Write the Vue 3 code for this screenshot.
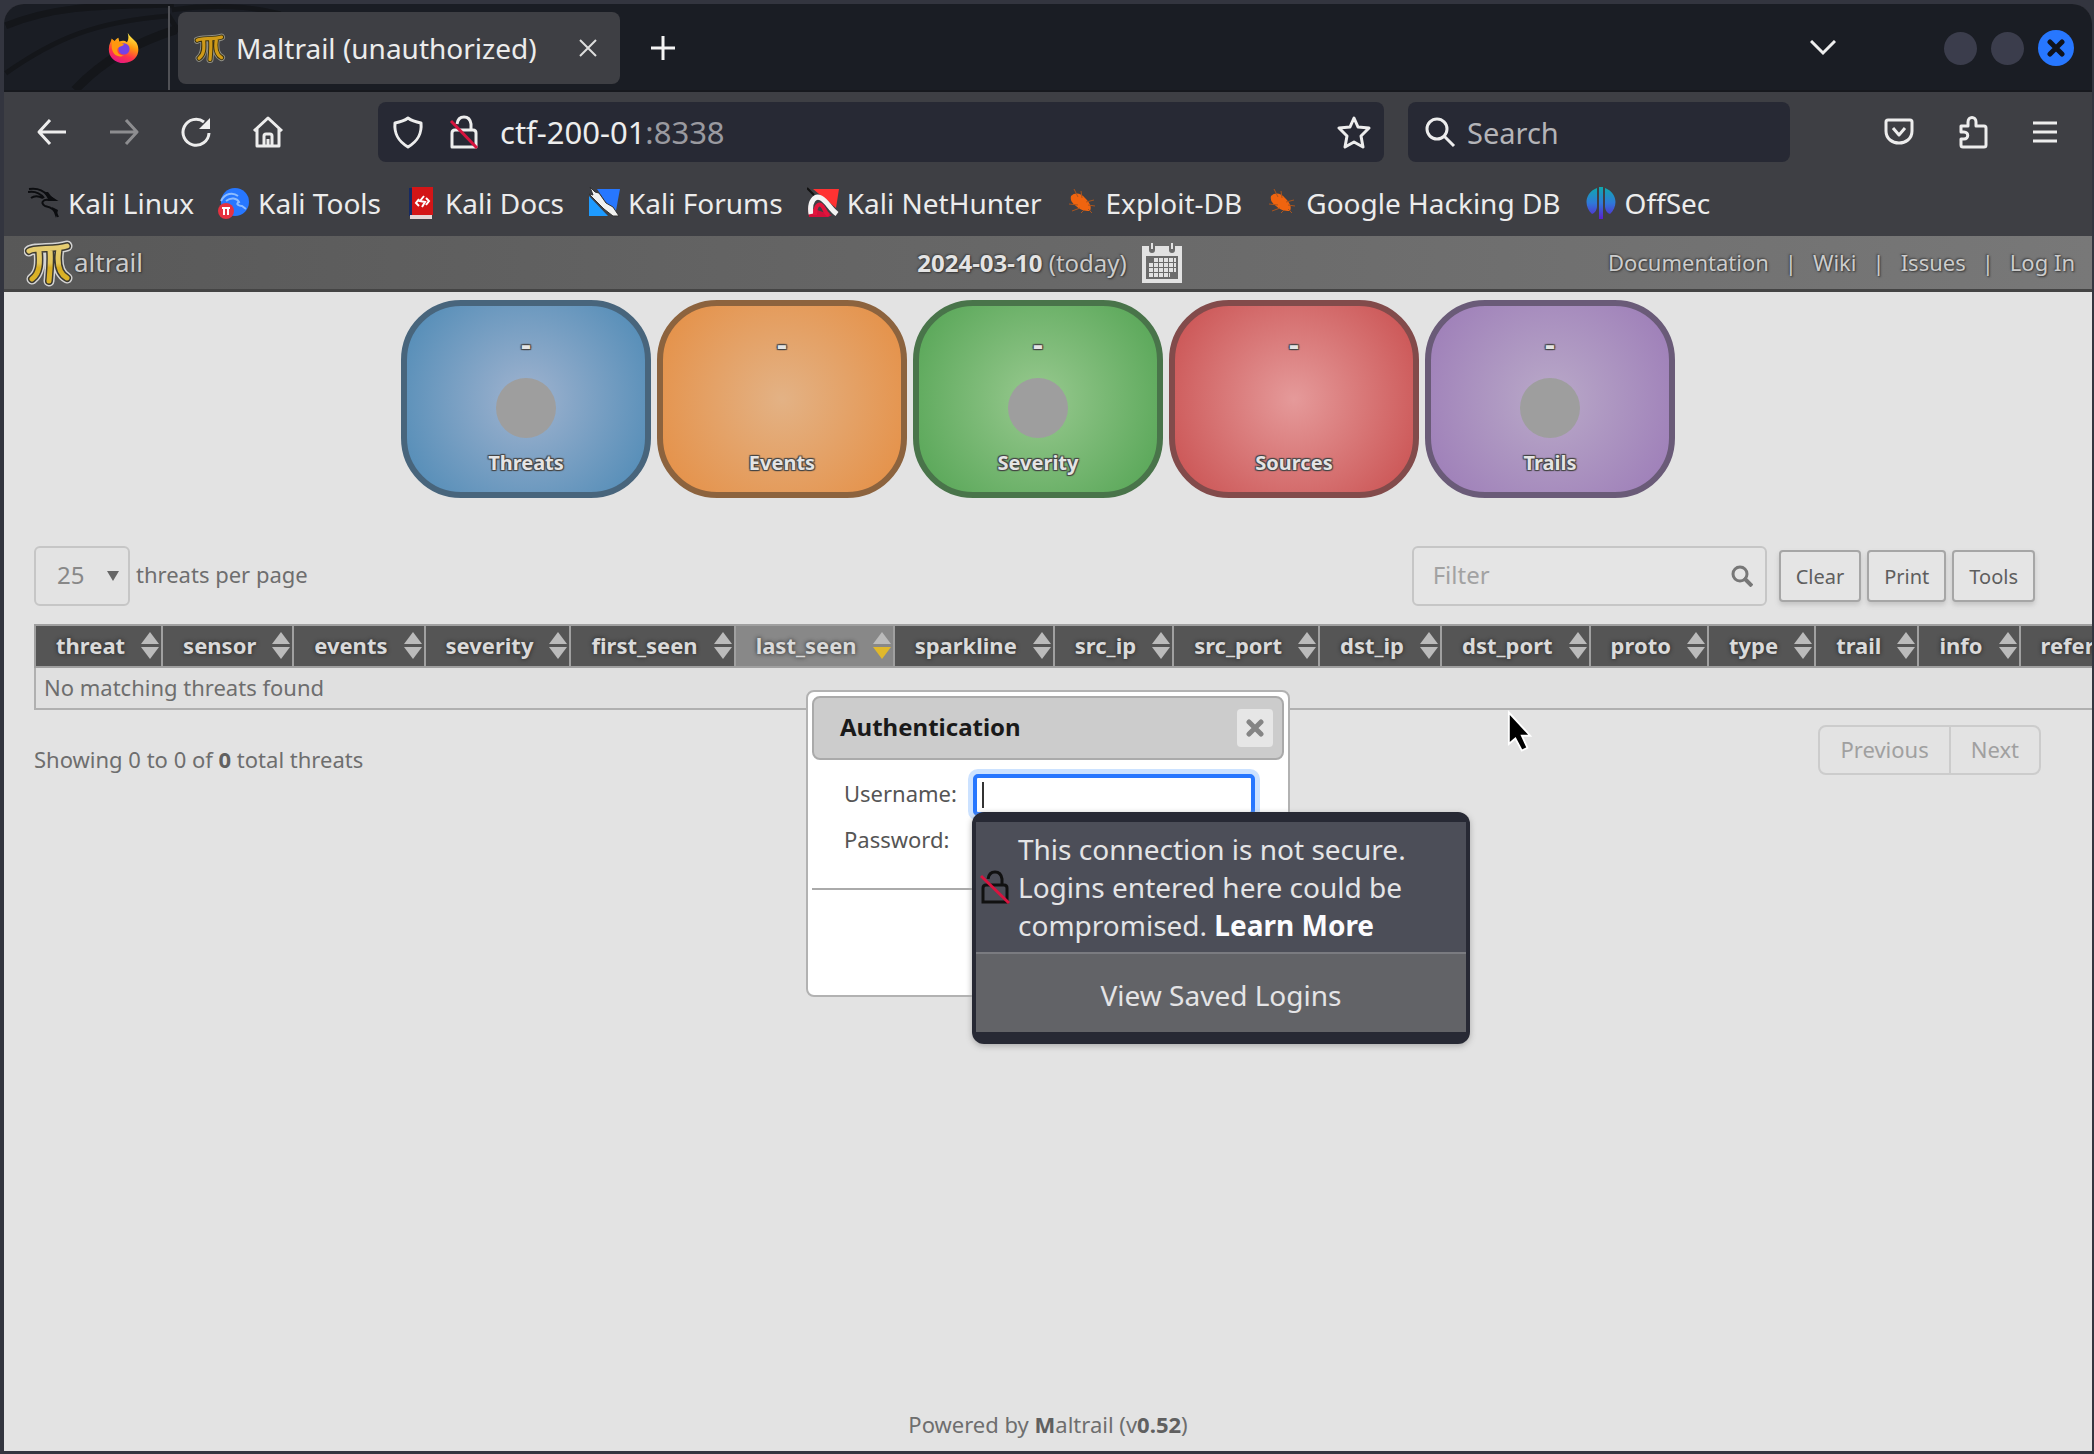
<script setup>
import { ref } from 'vue'

const host = ref('ctf-200-01')
const search = ref('')
const filter = ref('')
const perPage = ref('25')
const username = ref('')
const password = ref('')

const bookmarks = [
  { id: 'linux', label: 'Kali Linux' },
  { id: 'tools', label: 'Kali Tools' },
  { id: 'docs', label: 'Kali Docs' },
  { id: 'forums', label: 'Kali Forums' },
  { id: 'nethunter', label: 'Kali NetHunter' },
  { id: 'exploit', label: 'Exploit-DB' },
  { id: 'exploit', label: 'Google Hacking DB' },
  { id: 'offsec', label: 'OffSec' }
]
const links = ['Documentation', 'Wiki', 'Issues', 'Log In']
const tiles = [
  { label: 'Threats', tone: 'blue', dot: true },
  { label: 'Events', tone: 'orange', dot: false },
  { label: 'Severity', tone: 'green', dot: true },
  { label: 'Sources', tone: 'red', dot: false },
  { label: 'Trails', tone: 'purple', dot: true }
]
const actions = ['Clear', 'Print', 'Tools']
const columns = [
  'threat', 'sensor', 'events', 'severity', 'first_seen', 'last_seen', 'sparkline', 'src_ip',
  'src_port', 'dst_ip', 'dst_port', 'proto', 'type', 'trail', 'info', 'reference'
]
const logo = 'M5 12c5-4 26-1 38-5M15 12c1 12 1 22-7 28M26 11c1 12 0 20-1 31M35 10c-2 12-1 24 8 29'
</script>

<template>
  <div class="desktop">
    <div class="window">
      <header class="tabbar">
        <svg class="swirls" viewBox="0 0 300 87" aria-hidden="true">
          <g fill="none" stroke="#14161a">
            <path d="M0 22C50 2 90 2 170 0" stroke-width="7" />
            <path d="M0 70C50 35 90 18 165 12l10 16" stroke-width="5" />
            <path d="M70 87C100 55 135 38 172 26" stroke-width="9" />
            <path d="M168 6c40-6 80-4 110 4" stroke-width="5" />
          </g>
        </svg>
        <button class="pinned" aria-label="Firefox View">
          <svg width="32" height="32" viewBox="0 0 34 34">
            <defs>
              <linearGradient id="fx" x1="0.7" y1="0" x2="0.3" y2="1">
                <stop offset="0" stop-color="#fff44f" />
                <stop offset="0.4" stop-color="#ff980e" />
                <stop offset="0.7" stop-color="#ff3647" />
                <stop offset="1" stop-color="#e31587" />
              </linearGradient>
            </defs>
            <path fill="url(#fx)" d="M21 1c2 4 6 6 9 10 5 8 2 21-13 22C6 33 0 25 1 17c0-4 2-6 3-10l3 3c1-2 2-3 4-4l1 4c3-1 6-1 8 1 2-3 2-6 1-10z" />
            <circle cx="17" cy="18" r="6" fill="#7542e5" />
            <path fill="#ff980e" d="M4 8c5 2 8 4 13 5-2 3-6 2-7 5-1 4 3 7 7 7-6 3-12-1-13-8z" />
          </svg>
        </button>
        <div class="tab">
          <svg width="32" height="32" viewBox="0 0 50 48" aria-hidden="true">
            <g fill="none" stroke-linecap="round" stroke-linejoin="round">
              <path :d="logo" stroke="#8d8d84" stroke-width="11" />
              <path :d="logo" stroke="#3a3210" stroke-width="8" />
              <path :d="logo" stroke="#cf9a18" stroke-width="5" />
            </g>
          </svg>
          <span class="tab-title">Maltrail (unauthorized)</span>
          <button class="icon-btn" aria-label="Close tab">
            <svg width="18" height="18" viewBox="0 0 18 18"><path d="M1 1l16 16M17 1L1 17" stroke="#dedede" stroke-width="2" /></svg>
          </button>
        </div>
        <button class="icon-btn new-tab" aria-label="New tab">
          <svg width="24" height="24" viewBox="0 0 24 24"><path d="M12 0v24M0 12h24" stroke="#f4f4f4" stroke-width="3" /></svg>
        </button>
        <button class="icon-btn all-tabs" aria-label="List all tabs">
          <svg width="26" height="16" viewBox="0 0 26 16"><path d="M1 1l12 12L25 1" fill="none" stroke="#eee" stroke-width="3" /></svg>
        </button>
        <div class="win-buttons">
          <button class="dot" aria-label="Minimize"></button>
          <button class="dot" aria-label="Maximize"></button>
          <button class="dot close" aria-label="Close window">
            <svg width="18" height="18" viewBox="0 0 18 18"><path d="M3 3l12 12M15 3L3 15" stroke="#10131c" stroke-width="5" stroke-linecap="round" /></svg>
          </button>
        </div>
      </header>

      <nav class="toolbar" aria-label="Navigation">
        <div class="nav-buttons">
          <button class="icon-btn" aria-label="Back">
            <svg width="32" height="32" viewBox="0 0 32 32"><path d="M30 16H3M14 4L3 16l11 12" /></svg>
          </button>
          <button class="icon-btn dim" aria-label="Forward">
            <svg width="32" height="32" viewBox="0 0 32 32"><path d="M2 16h27M18 4l11 12-11 12" /></svg>
          </button>
          <button class="icon-btn" aria-label="Reload">
            <svg width="32" height="32" viewBox="0 0 32 32"><path d="M29 17a13 13 0 1 1-5-11" /><path d="M30 2v11H19z" fill="#f1f1f1" stroke="none" /></svg>
          </button>
          <button class="icon-btn" aria-label="Home">
            <svg width="32" height="32" viewBox="0 0 32 32"><path d="M2 15L16 2l14 13M5 13v17h22V13M12 30V20q0-2 2-2h4q2 0 2 2v10M16 23v7" /></svg>
          </button>
        </div>
        <div class="urlbar">
          <svg width="32" height="34" viewBox="0 0 32 34"><path d="M16 3c4 3 8 4 13 5 1 11-3 18-13 24C6 26 2 19 3 8c5-1 9-2 13-5z" /></svg>
          <svg class="lock" width="30" height="34" viewBox="0 0 30 34">
            <path d="M3 18q0-3 3-3h18q3 0 3 3v14H3zM8 9q1-7 7-7t7 7v6" />
            <path d="M2 6l26 27" class="slash" />
          </svg>
          <label class="url"><input v-model="host" aria-label="Address" size="9" /><span>:8338</span></label>
          <button class="icon-btn" aria-label="Bookmark this page">
            <svg width="34" height="34" viewBox="0 0 34 34"><path d="M17 3l4 9 11 1-8 8 2 11-9-5-9 5 2-11-8-8 11-1z" /></svg>
          </button>
        </div>
        <label class="searchbar">
          <svg width="32" height="32" viewBox="0 0 32 32"><circle cx="13" cy="13" r="10" /><path d="M20 20l10 10" /></svg>
          <input v-model="search" placeholder="Search" aria-label="Search" />
        </label>
        <div class="tools">
          <button class="icon-btn" aria-label="Save to Pocket">
            <svg width="30" height="32" viewBox="0 0 30 32"><path d="M4 4h22q2 0 2 2v9c0 16-26 16-26 0V6q0-2 2-2zM9 12l6 7 6-7" /></svg>
          </button>
          <button class="icon-btn" aria-label="Extensions">
            <svg width="30" height="34" viewBox="0 0 30 34"><path d="M3 11h7V7c0-6 8-6 8 0v4h8q2 0 2 2v17q0 2-2 2H5q-2 0-2-2v-6h3c5 0 5-7 0-7H3z" /></svg>
          </button>
          <button class="icon-btn" aria-label="Menu">
            <svg width="26" height="24" viewBox="0 0 26 24"><path d="M1 3h24M1 12h24M1 21h24" /></svg>
          </button>
        </div>
      </nav>

      <nav class="bookmarks" aria-label="Bookmarks">
        <a v-for="b in bookmarks" :key="b.label" href="#">
          <svg v-if="b.id === 'linux'" width="32" height="32" viewBox="0 0 32 32">
            <path d="M1 2c7-1 14 1 18 6l8 5-6 0c-6-1-9 3-4 6 6 1 11 4 13 11" fill="none" stroke="#0c0d10" stroke-width="2" />
            <path d="M0 5c6-1 12 1 16 6M3 11c4-3 8-2 12 0" fill="none" stroke="#0c0d10" stroke-width="2" />
            <path d="M16 5l4 0 3 4 6 5-9-2zM24 20l6 3-2 8z" fill="#0c0d10" />
          </svg>
          <svg v-else-if="b.id === 'tools'" width="32" height="32" viewBox="0 0 32 32">
            <circle cx="17" cy="15" r="14" fill="#2777ff" />
            <path d="M3 14c4-8 12-9 17-5M8 14c5-4 11-3 13 1-4 2 0 4 3 4l4 3" fill="none" stroke="#8dbcff" stroke-width="2" />
            <circle cx="8" cy="24" r="8" fill="#e63240" />
            <path d="M4 21h8M6 21v7M10 21v7" stroke="#fff" stroke-width="2" />
          </svg>
          <svg v-else-if="b.id === 'docs'" width="32" height="32" viewBox="0 0 32 32">
            <path d="M4 1h5v28H4z" fill="#172a63" />
            <path d="M7 0h21v28H7z" fill="#d31517" />
            <path d="M5 28h22v4H5z" fill="#e4d6d6" />
            <path d="M14 12l-3 4 3 3M21 11l3 3-3 4M19 9l-4 5 5 1-3 5" fill="none" stroke="#fff" stroke-width="2" />
          </svg>
          <svg v-else-if="b.id === 'forums'" width="32" height="32" viewBox="0 0 32 32">
            <path d="M9 2h23l-5 27z" fill="#2777ff" />
            <path d="M1 9l19 20H1z" fill="#1e9bff" />
            <path d="M2 0l5 5 4 1 7 10 7 4 6 9-6 0-9-7-8-8-7-7 4 1z" fill="#f2f2f0" stroke="#333" stroke-width="1" />
          </svg>
          <svg v-else-if="b.id === 'nethunter'" width="32" height="32" viewBox="0 0 32 32">
            <path d="M6 2h26l-3 19z" fill="#ff3232" />
            <path d="M1 20l24 8-4 2H2z" fill="#d0103a" />
            <path d="M4 27C2 14 8 8 14 11c6 3 9 11 16 16" fill="none" stroke="#f4f4f4" stroke-width="5" />
            <path d="M8 28c0-8 3-12 6-10 4 2 3 8 8 10" fill="none" stroke="#e1143c" stroke-width="4" />
            <path d="M0 1l7 7" stroke="#111" stroke-width="2" />
          </svg>
          <svg v-else-if="b.id === 'exploit'" width="32" height="32" viewBox="0 0 32 32">
            <path d="M5 9c4-4 10-3 14 2 5 5 7 9 5 13-6 0-10-1-14-5-4-3-6-6-5-10z" fill="#f0640f" />
            <path d="M8 2l4 8M15 4l1 7M20 15l8-2M22 18l7 1M22 22l4 4M12 18l-9-1M14 21l-8 3M18 23l-3 3" stroke="#a8541e" stroke-width="1" />
          </svg>
          <svg v-else width="32" height="32" viewBox="0 0 32 32">
            <defs>
              <linearGradient id="os" x1="0" y1="0" x2="0" y2="1">
                <stop offset="0" stop-color="#0fa9ad" />
                <stop offset="0.5" stop-color="#2f79d8" />
                <stop offset="1" stop-color="#5a1fd0" />
              </linearGradient>
            </defs>
            <path fill="url(#os)" d="M12 1v18c0 4-2 7-5 8C-1 20-1 6 12 1zM20 1v18c0 4 2 7 5 8 8-7 8-21-5-26zM14 0h4v32h-4z" />
          </svg>
          <span>{{ b.label }}</span>
        </a>
      </nav>

      <div class="page">
        <header class="site-header">
          <a class="brand" href="#">
            <svg width="50" height="48" viewBox="0 0 50 48" aria-hidden="true">
              <defs>
                <linearGradient id="gold" gradientUnits="userSpaceOnUse" x1="0" y1="0" x2="0" y2="48">
                  <stop offset="0" stop-color="#e6cf7c" />
                  <stop offset="0.5" stop-color="#e3c65a" />
                  <stop offset="0.6" stop-color="#d8ae22" />
                  <stop offset="1" stop-color="#dcb52e" />
                </linearGradient>
              </defs>
              <g fill="none" stroke-linecap="round" stroke-linejoin="round">
                <path :d="logo" stroke="#d4d4d4" stroke-width="11" />
                <path :d="logo" stroke="#3c3a32" stroke-width="8" />
                <path :d="logo" stroke="url(#gold)" stroke-width="5" />
              </g>
            </svg>
            <span>altrail</span>
          </a>
          <div class="date">
            <span><b>2024-03-10</b> (today)</span>
            <button class="icon-btn" aria-label="Choose date">
              <svg width="40" height="40" viewBox="0 0 40 40">
                <path d="M0 3h40v37H0z" fill="#e2e2e2" />
                <path d="M4 13h32v23H4z" fill="#6b6b6b" />
                <path d="M12 17h22M7 22h27M7 27h27M7 32h21" stroke="#e2e2e2" stroke-width="4" stroke-dasharray="4 1" />
                <path d="M10 0v7M30 0v7" stroke="#6b6b6b" stroke-width="6" stroke-linecap="round" />
                <path d="M10 0v6M30 0v6" stroke="#e2e2e2" stroke-width="2" />
              </svg>
            </button>
          </div>
          <ul class="links">
            <li v-for="l in links" :key="l"><a href="#">{{ l }}</a></li>
          </ul>
        </header>

        <main class="content">
          <section class="tiles">
            <article v-for="t in tiles" :key="t.label" class="tile" :class="t.tone">
              <b class="count">-</b>
              <span class="pie" :class="{ empty: !t.dot }"></span>
              <b>{{ t.label }}</b>
            </article>
          </section>

          <section class="controls">
            <label class="length">
              <span class="select-box">
                <select v-model="perPage"><option>25</option><option>50</option><option>100</option></select>
                <svg width="12" height="10" viewBox="0 0 12 10" aria-hidden="true"><path d="M0 0h12L6 10z" fill="#666" /></svg>
              </span>
              <span class="length-text">threats per page</span>
            </label>
            <div class="filter-area">
              <label class="filter">
                <input v-model="filter" placeholder="Filter" aria-label="Filter" />
                <svg width="22" height="22" viewBox="0 0 22 22" aria-hidden="true"><circle cx="9" cy="9" r="7" fill="none" stroke="#777" stroke-width="3" /><path d="M13 13l8 8" stroke="#777" stroke-width="4" /></svg>
              </label>
              <button v-for="a in actions" :key="a" class="action">{{ a }}</button>
            </div>
          </section>

          <div class="table-wrap">
            <table>
              <thead>
                <tr>
                  <th v-for="c in columns" :key="c" scope="col" :class="{ sorted: c === 'last_seen' }">
                    <span class="th">{{ c }}
                      <svg width="18" height="28" viewBox="0 0 18 28" aria-hidden="true">
                        <path d="M9 0l9 12H0z" fill="#bbb" />
                        <path d="M0 15h18L9 27z" :fill="c === 'last_seen' ? '#e0b82c' : '#bbb'" />
                      </svg>
                    </span>
                  </th>
                </tr>
              </thead>
              <tbody>
                <tr><td :colspan="columns.length">No matching threats found</td></tr>
              </tbody>
            </table>
          </div>

          <section class="summary">
            <p>Showing 0 to 0 of <b>0</b> total threats</p>
            <div class="pager">
              <button disabled>Previous</button>
              <button disabled>Next</button>
            </div>
          </section>
        </main>

        <footer>Powered by&nbsp;<b>M</b>altrail (v<b>0.52</b>)</footer>

        <div class="overlay">
          <form class="dialog" role="dialog" aria-labelledby="auth-title" @submit.prevent>
            <div class="dialog-title">
              <h2 id="auth-title">Authentication</h2>
              <button type="button" aria-label="Close">
                <svg width="18" height="18" viewBox="0 0 18 18"><path d="M3 3l12 12M15 3L3 15" stroke="#858585" stroke-width="5" stroke-linecap="round" /></svg>
              </button>
            </div>
            <div class="field">
              <label for="user">Username:</label>
              <input id="user" v-model="username" class="focused" />
              <span class="caret"></span>
            </div>
            <div class="field">
              <label for="pass">Password:</label>
              <input id="pass" v-model="password" type="password" />
            </div>
            <div class="dialog-foot"></div>

            <aside class="popup">
              <div class="warning">
                <svg width="30" height="34" viewBox="0 0 30 34" aria-hidden="true">
                  <path d="M3 18q0-3 3-3h18q3 0 3 3v14H3zM8 9q1-7 7-7t7 7v6" />
                  <path d="M1 6l28 27" class="slash" />
                </svg>
                <p>This connection is not secure. Logins entered here could be compromised. <a href="#">Learn More</a></p>
              </div>
              <button type="button" class="saved">View Saved Logins</button>
            </aside>
          </form>
        </div>
        <svg class="cursor" width="26" height="44" viewBox="0 0 28 46" aria-hidden="true">
          <path d="M2 2v34l7-6 7 13 6-3-6-13h9z" fill="#000" stroke="#fff" stroke-width="2" />
        </svg>
      </div>
    </div>
  </div>
</template>

<style>
body {
  margin: 0;
  background: #2f3241;
}
</style>

<style scoped>
* {
  box-sizing: border-box;
}
.desktop {
  min-height: 100vh;
  display: flex;
  padding: 4px 2px 3px 4px;
  overflow: hidden;
  background: #33353f;
  font-family: "Noto Sans", sans-serif;
}
.window {
  flex: 1;
  min-width: 0;
  display: flex;
  flex-direction: column;
  border-radius: 20px 20px 0 0;
  overflow: hidden;
  background: #3e3f44;
}
button,
input,
select {
  font-family: inherit;
  border: 0;
  margin: 0;
  padding: 0;
  background: none;
  outline: 0;
}
a {
  color: inherit;
  text-decoration: none;
}
svg {
  flex: none;
  display: block;
}
.icon-btn {
  display: flex;
  flex: none;
}

.tabbar {
  position: relative;
  display: flex;
  align-items: center;
  height: 88px;
  padding: 2px 18px 0 0;
  background: #1a1d24;
  border-bottom: 2px solid #17191e;
}
.swirls {
  position: absolute;
  left: 0;
  top: 0;
  width: 300px;
  height: 86px;
}
.pinned {
  position: relative;
  align-self: stretch;
  display: flex;
  align-items: center;
  justify-content: flex-end;
  width: 166px;
  padding-right: 28px;
  border-right: 2px solid #505156;
}
.tab {
  position: relative;
  display: flex;
  align-items: center;
  width: 442px;
  height: 72px;
  margin-left: 8px;
  padding: 0 23px 0 16px;
  border-radius: 8px;
  background: #3e3f44;
  color: #ececec;
  font-size: 28px;
}
.tab-title {
  flex: 1;
  margin-left: 10px;
  white-space: nowrap;
}
.new-tab {
  margin-left: 31px;
}
.all-tabs {
  margin-left: auto;
  margin-right: 108px;
}
.win-buttons {
  display: flex;
  align-items: center;
  gap: 14px;
}
.dot {
  width: 33px;
  height: 33px;
  border-radius: 50%;
  background: #3b3d4c;
}
.dot.close {
  width: 36px;
  height: 36px;
  display: grid;
  place-items: center;
  background: #2777ff;
}

.toolbar {
  display: flex;
  align-items: center;
  padding: 10px 34px 10px 32px;
}
.toolbar svg {
  fill: none;
  stroke: #ededed;
  stroke-width: 3;
  stroke-linejoin: round;
}
.nav-buttons {
  display: flex;
  gap: 40px;
}
.dim {
  opacity: 0.45;
}
.urlbar,
.searchbar {
  display: flex;
  align-items: center;
  height: 60px;
  border-radius: 8px;
  background: #272934;
  color: #ededed;
}
.urlbar {
  flex: 1;
  margin-left: 94px;
  padding: 0 13px 0 14px;
}
.lock {
  margin: 0 21px 0 25px;
}
.toolbar .slash,
.popup .slash {
  stroke: #d8143f;
}
.url {
  flex: 1;
  display: flex;
  color: #9a9aa0;
  font-size: 31px;
}
.url input {
  field-sizing: content;
  font-size: 31px;
  color: #ededed;
}
.searchbar {
  width: 382px;
  margin-left: 24px;
  padding-left: 16px;
  gap: 11px;
}
.searchbar input {
  flex: 1;
  min-width: 0;
  font-size: 29px;
  color: #ededed;
}
.searchbar input::placeholder {
  color: #b4b4b8;
  opacity: 1;
}
.tools {
  display: flex;
  align-items: center;
  gap: 44px;
  margin-left: 94px;
}

.bookmarks {
  display: flex;
  align-items: center;
  gap: 24px;
  height: 64px;
  padding: 0 24px 2px;
  color: #ececec;
  font-size: 28px;
  white-space: nowrap;
}
.bookmarks a {
  display: flex;
  align-items: center;
  gap: 8px;
}

.page {
  position: relative;
  flex: 1;
  display: flex;
  flex-direction: column;
  background: #e3e3e3;
  color: #6e6e6e;
  font-size: 22px;
}
.site-header {
  display: grid;
  grid-template-columns: 1fr auto 1fr;
  align-items: center;
  height: 56px;
  padding: 0 17px 0 20px;
  background: linear-gradient(90deg, #585858, #787878);
  border-bottom: 3px solid #444;
  color: #ccc;
  text-shadow: 1px 1px 2px #333, -1px -1px 2px #444;
}
.brand {
  display: flex;
  align-items: center;
  font-size: 26px;
}
.brand span {
  padding-bottom: 2px;
}
.date {
  display: flex;
  align-items: center;
  gap: 15px;
  font-size: 24px;
}
.date b {
  color: #e4e4e4;
}
.links {
  display: flex;
  justify-content: flex-end;
  margin: 0;
  padding: 0 0 2px;
  list-style: none;
}
.links li + li::before {
  content: "|";
  margin: 0 16px;
}
.content {
  flex: 1;
}
.tiles {
  display: flex;
  justify-content: center;
  gap: 6px;
  padding: 8px 20px 0 0;
}
.tile {
  display: flex;
  flex-direction: column;
  align-items: center;
  width: 250px;
  height: 198px;
  padding-top: 21px;
  border: 6px solid;
  border-radius: 60px;
  color: #e4e4e4;
  font-size: 20px;
  line-height: 32px;
  text-shadow: 1px 1px 1px #444, -1px -1px 1px #444, 1px -1px 1px #444, -1px 1px 1px #444;
}
.count {
  font-size: 31px;
}
.pie {
  width: 60px;
  height: 60px;
  margin: 19px 0 9px;
  border-radius: 50%;
  background: #9e9e9e;
}
.pie.empty {
  background: none;
}
.blue { border-color: #48657c; background: radial-gradient(circle, #a0b3cf, #568eb8 90%); }
.orange { border-color: #8c633e; background: radial-gradient(circle, #e3b285, #e5924a 90%); }
.green { border-color: #49744a; background: radial-gradient(circle, #98c98f, #5ba85a 90%); }
.red { border-color: #824b4b; background: radial-gradient(circle, #e59a9a, #cc5757 90%); }
.purple { border-color: #6a5b78; background: radial-gradient(circle, #b9a9c8, #9f80b9 90%); }

.controls {
  display: flex;
  justify-content: space-between;
  align-items: center;
  margin: 48px 57px 0 30px;
}
.length {
  display: flex;
  align-items: center;
  gap: 6px;
}
.length-text {
  padding-bottom: 5px;
}
.select-box {
  position: relative;
}
.select-box select {
  appearance: none;
  display: block;
  width: 96px;
  height: 60px;
  padding: 0 0 3px 21px;
  border: 2px solid #c6c6c6;
  border-radius: 6px;
  color: #888;
  font-size: 24px;
}
.select-box svg {
  position: absolute;
  right: 11px;
  top: 25px;
}
.filter-area {
  display: flex;
  align-items: center;
  gap: 6px;
}
.filter {
  display: flex;
  align-items: center;
  width: 355px;
  height: 60px;
  margin-right: 6px;
  padding: 0 12px 0 19px;
  border: 2px solid #c6c6c6;
  border-radius: 6px;
  background: #e5e5e5;
}
.filter input {
  flex: 1;
  min-width: 0;
  padding-bottom: 3px;
  font-size: 24px;
}
.filter input::placeholder {
  color: #a2a2a2;
  opacity: 1;
}
.action {
  height: 52px;
  padding: 0 15px;
  border: 2px solid #a6a6a6;
  border-radius: 4px;
  background: #e5e5e5;
  box-shadow: 0 3px 5px #c4c4c4;
  color: #5e5e5e;
  font-size: 20px;
}

.table-wrap {
  margin: 18px 0 0 30px;
  overflow: hidden;
}
table {
  border-collapse: collapse;
  border: 2px solid #b0b0b0;
}
th {
  height: 42px;
  padding: 0 2px 0 20px;
  border: 2px solid #a0a0a0;
  background: #555;
  color: #dadada;
  line-height: 26px;
  text-shadow: 0 0 4px #222;
}
th.sorted {
  background: #888;
}
.th {
  display: flex;
  justify-content: space-between;
  gap: 16px;
}
td {
  height: 42px;
  padding: 0 8px 2px;
  background: #e0e0e0;
}
.summary {
  display: flex;
  justify-content: space-between;
  align-items: center;
  margin: 15px 51px 0 30px;
}
.summary p {
  margin: 18px 0 0;
}
.summary b {
  color: #606060;
}
.pager {
  display: flex;
  border: 2px solid #ccc;
  border-radius: 8px;
}
.pager button {
  height: 46px;
  padding: 0 20px 2px;
  color: #a0a0a0;
  font-size: 22px;
}
.pager button + button {
  border-left: 2px solid #ccc;
}
footer {
  display: flex;
  justify-content: center;
  padding-bottom: 12px;
}
footer b {
  color: #606060;
}

.overlay {
  position: absolute;
  inset: 0;
  display: grid;
  place-items: center;
}
.dialog {
  position: relative;
  width: 484px;
  height: 307px;
  padding: 4px;
  border: 2px solid #b2b2b2;
  border-radius: 8px;
  background: #fff;
  color: #555;
}
.dialog-title {
  display: flex;
  align-items: center;
  justify-content: space-between;
  height: 64px;
  margin-bottom: 12px;
  padding: 0 9px 0 26px;
  border: 2px solid #aaa;
  border-radius: 8px;
  background: #ccc;
}
.dialog-title h2 {
  margin: 0;
  padding-bottom: 4px;
  color: #1a1a1a;
  font-size: 24px;
}
.dialog-title button {
  display: grid;
  place-items: center;
  width: 36px;
  height: 38px;
  border-radius: 4px;
  background: #e6e6e6;
}
.field {
  position: relative;
  display: flex;
  align-items: center;
  height: 46px;
  padding-left: 32px;
}
.field label {
  width: 129px;
  padding-bottom: 4px;
}
.field input {
  width: 282px;
  height: 42px;
  border: 2px solid #aaa;
  border-radius: 5px;
  background: #fff;
  font-size: 22px;
}
.field .focused {
  border: 4px solid #2777ff;
  box-shadow: 0 0 0 5px #cce2ff;
}
.caret {
  position: absolute;
  left: 170px;
  top: 10px;
  width: 2px;
  height: 26px;
  background: #333;
}
.dialog-foot {
  margin-top: 24px;
  border-top: 2px solid #aaa;
}
.popup {
  position: absolute;
  left: 164px;
  top: 120px;
  width: 498px;
  padding: 10px 4px 12px;
  border-radius: 12px;
  background: #272934;
  box-shadow: 0 2px 6px #aaa;
  color: #e4e4e6;
  font-size: 28px;
  line-height: 38px;
}
.warning {
  display: flex;
  align-items: center;
  gap: 8px;
  height: 132px;
  padding-left: 4px;
  background: #4c4e58;
  border-bottom: 2px solid #7a7b80;
}
.warning svg {
  fill: none;
  stroke: #111;
  stroke-width: 3;
}
.warning p {
  margin: 0;
  width: 400px;
}
.warning a {
  color: #fbfbfe;
  font-weight: 700;
}
.saved {
  display: block;
  width: 100%;
  height: 78px;
  padding-top: 3px;
  background: #626367;
  color: #e4e4e6;
  font-size: 28px;
}
.cursor {
  position: absolute;
  left: 72%;
  top: 474px;
}
</style>
